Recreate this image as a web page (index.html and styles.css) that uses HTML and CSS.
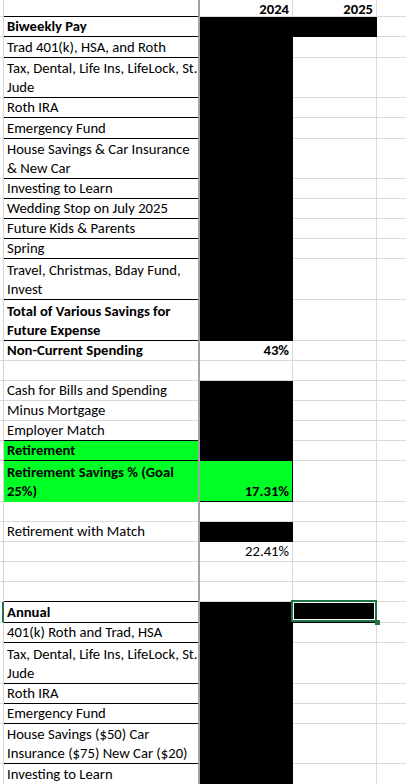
FILE: index.html
```html
<!DOCTYPE html>
<html>
<head>
<meta charset="utf-8">
<link rel="stylesheet" href="styles.css">
</head>
<body>
<div class="sheet">
  <div class="row h17 head">
    <div class="stub"></div><div class="cell lab k"></div><div class="sep"></div>
    <div class="cell num b bold">2024</div><div class="cell num c bold">2025</div><div class="cell d"></div>
  </div>
  <div class="row h20">
    <div class="stub"></div><div class="cell lab k bold">Biweekly Pay</div><div class="sep"></div>
    <div class="cell num b blk"></div><div class="cell num c blk"></div><div class="cell d"></div>
  </div>
  <div class="row h21">
    <div class="stub"></div><div class="cell lab k">Trad 401(k), HSA, and Roth</div><div class="sep"></div>
    <div class="cell num b blk"></div><div class="cell num c"></div><div class="cell d"></div>
  </div>
  <div class="row h40">
    <div class="stub"></div><div class="cell lab k"><span>Tax, Dental, Life Ins, LifeLock, St.<br>Jude</span></div><div class="sep"></div>
    <div class="cell num b blk"></div><div class="cell num c"></div><div class="cell d"></div>
  </div>
  <div class="row h20">
    <div class="stub"></div><div class="cell lab k">Roth IRA</div><div class="sep"></div>
    <div class="cell num b blk"></div><div class="cell num c"></div><div class="cell d"></div>
  </div>
  <div class="row h21">
    <div class="stub"></div><div class="cell lab k">Emergency Fund</div><div class="sep"></div>
    <div class="cell num b blk"></div><div class="cell num c"></div><div class="cell d"></div>
  </div>
  <div class="row h40">
    <div class="stub"></div><div class="cell lab k"><span>House Savings &amp; Car Insurance<br>&amp; New Car</span></div><div class="sep"></div>
    <div class="cell num b blk"></div><div class="cell num c"></div><div class="cell d"></div>
  </div>
  <div class="row h20">
    <div class="stub"></div><div class="cell lab k">Investing to Learn</div><div class="sep"></div>
    <div class="cell num b blk"></div><div class="cell num c"></div><div class="cell d"></div>
  </div>
  <div class="row h20">
    <div class="stub"></div><div class="cell lab k">Wedding Stop on July 2025</div><div class="sep"></div>
    <div class="cell num b blk"></div><div class="cell num c"></div><div class="cell d"></div>
  </div>
  <div class="row h20">
    <div class="stub"></div><div class="cell lab k">Future Kids &amp; Parents</div><div class="sep"></div>
    <div class="cell num b blk"></div><div class="cell num c"></div><div class="cell d"></div>
  </div>
  <div class="row h20">
    <div class="stub"></div><div class="cell lab k">Spring</div><div class="sep"></div>
    <div class="cell num b blk"></div><div class="cell num c"></div><div class="cell d"></div>
  </div>
  <div class="row h41">
    <div class="stub"></div><div class="cell lab k"><span>Travel, Christmas, Bday Fund,<br>Invest</span></div><div class="sep"></div>
    <div class="cell num b blk"></div><div class="cell num c"></div><div class="cell d"></div>
  </div>
  <div class="row h41">
    <div class="stub"></div><div class="cell lab k bold"><span>Total of Various Savings for<br>Future Expense</span></div><div class="sep"></div>
    <div class="cell num b blk"></div><div class="cell num c"></div><div class="cell d"></div>
  </div>
  <div class="row h20">
    <div class="stub"></div><div class="cell lab bold">Non-Current Spending</div><div class="sep"></div>
    <div class="cell num b bold">43%</div><div class="cell num c"></div><div class="cell d"></div>
  </div>
  <div class="row h20">
    <div class="stub"></div><div class="cell lab"></div><div class="sep"></div>
    <div class="cell num b"></div><div class="cell num c"></div><div class="cell d"></div>
  </div>
  <div class="row h20">
    <div class="stub"></div><div class="cell lab">Cash for Bills and Spending</div><div class="sep"></div>
    <div class="cell num b blk"></div><div class="cell num c"></div><div class="cell d"></div>
  </div>
  <div class="row h20">
    <div class="stub"></div><div class="cell lab">Minus Mortgage</div><div class="sep"></div>
    <div class="cell num b blk"></div><div class="cell num c"></div><div class="cell d"></div>
  </div>
  <div class="row h20">
    <div class="stub"></div><div class="cell lab k">Employer Match</div><div class="sep"></div>
    <div class="cell num b blk"></div><div class="cell num c"></div><div class="cell d"></div>
  </div>
  <div class="row h20">
    <div class="stub"></div><div class="cell lab k grn bold">Retirement</div><div class="sep"></div>
    <div class="cell num b blk"></div><div class="cell num c"></div><div class="cell d"></div>
  </div>
  <div class="row h41">
    <div class="stub"></div><div class="cell lab grn bold"><span>Retirement Savings % (Goal<br>25%)</span></div><div class="sep"></div>
    <div class="cell num b grn boxed bold">17.31%</div><div class="cell num c"></div><div class="cell d"></div>
  </div>
  <div class="row h20">
    <div class="stub"></div><div class="cell lab"></div><div class="sep"></div>
    <div class="cell num b"></div><div class="cell num c"></div><div class="cell d"></div>
  </div>
  <div class="row h20">
    <div class="stub"></div><div class="cell lab">Retirement with Match</div><div class="sep"></div>
    <div class="cell num b blk"></div><div class="cell num c"></div><div class="cell d"></div>
  </div>
  <div class="row h20">
    <div class="stub"></div><div class="cell lab"></div><div class="sep"></div>
    <div class="cell num b">22.41%</div><div class="cell num c"></div><div class="cell d"></div>
  </div>
  <div class="row h20">
    <div class="stub"></div><div class="cell lab"></div><div class="sep"></div>
    <div class="cell num b"></div><div class="cell num c"></div><div class="cell d"></div>
  </div>
  <div class="row h20">
    <div class="stub"></div><div class="cell lab k"></div><div class="sep"></div>
    <div class="cell num b"></div><div class="cell num c"></div><div class="cell d"></div>
  </div>
  <div class="row h21">
    <div class="stub active"></div><div class="cell lab k bold">Annual</div><div class="sep"></div>
    <div class="cell num b blk"></div><div class="cell num c blk sel"></div><div class="cell d"></div>
  </div>
  <div class="row h20">
    <div class="stub"></div><div class="cell lab k">401(k) Roth and Trad, HSA</div><div class="sep"></div>
    <div class="cell num b blk"></div><div class="cell num c"></div><div class="cell d"></div>
  </div>
  <div class="row h41">
    <div class="stub"></div><div class="cell lab k"><span>Tax, Dental, Life Ins, LifeLock, St.<br>Jude</span></div><div class="sep"></div>
    <div class="cell num b blk"></div><div class="cell num c"></div><div class="cell d"></div>
  </div>
  <div class="row h20">
    <div class="stub"></div><div class="cell lab k">Roth IRA</div><div class="sep"></div>
    <div class="cell num b blk"></div><div class="cell num c"></div><div class="cell d"></div>
  </div>
  <div class="row h20">
    <div class="stub"></div><div class="cell lab k">Emergency Fund</div><div class="sep"></div>
    <div class="cell num b blk"></div><div class="cell num c"></div><div class="cell d"></div>
  </div>
  <div class="row h40">
    <div class="stub"></div><div class="cell lab k"><span>House Savings ($50) Car<br>Insurance ($75) New Car ($20)</span></div><div class="sep"></div>
    <div class="cell num b blk"></div><div class="cell num c"></div><div class="cell d"></div>
  </div>
  <div class="row h21">
    <div class="stub"></div><div class="cell lab k">Investing to Learn</div><div class="sep"></div>
    <div class="cell num b blk"></div><div class="cell num c"></div><div class="cell d"></div>
  </div>
</div>
</body>
</html>
```
FILE: styles.css
```css
* { box-sizing: border-box; }
html, body { margin: 0; padding: 0; background: #fff; }
body {
  font-family: Carlito, Calibri, Lato, "Liberation Sans", sans-serif;
  font-size: 14.67px;
  color: #000;
  width: 406px;
  height: 784px;
  overflow: hidden;
}
.sheet { display: flex; flex-direction: column; }
.row {
  display: grid;
  grid-template-columns: 4px 194px 2px 93px 84px 1fr;
  flex: none;
}
.h17 { height: 17px; }
.h20 { height: 20px; }
.h21 { height: 21px; }
.h40 { height: 40px; }
.h41 { height: 41px; }

.stub {
  border-right: 1px solid #d4d4d4;
  border-bottom: 1px solid #dadada;
}
.stub.active { border-right: 2px solid #217346; }
.sep { background: #a2a2a2; }

.cell {
  display: flex;
  align-items: flex-end;
  overflow: hidden;
  white-space: nowrap;
  padding: 0 3px;
  line-height: 19px;
  border-bottom: 1px solid #dadada;
}
.head .cell {
  overflow: visible;
  line-height: 14px;
}
.num { justify-content: flex-end; }
.b, .c { border-right: 1px solid #dadada; }
.k { border-bottom-color: #000; }
.bold { font-weight: 700; }
.blk { background: #000; border-color: #000; }
.grn { background: #00ff24; border-bottom-color: #00ff24; }
.lab.k.grn { border-bottom-color: #000; }
.grn.boxed { border-right-color: #000; border-bottom-color: #000; }

.sel { position: relative; overflow: visible; }
.sel::after {
  content: "";
  position: absolute;
  top: -2px;
  left: -2px;
  right: -1px;
  bottom: 0;
  border: 2px solid #217346;
  box-shadow: inset 0 0 0 1px #fff;
}
.sel::before {
  content: "";
  position: absolute;
  right: -4px;
  bottom: -3px;
  width: 5px;
  height: 5px;
  background: #217346;
  z-index: 1;
}
```
